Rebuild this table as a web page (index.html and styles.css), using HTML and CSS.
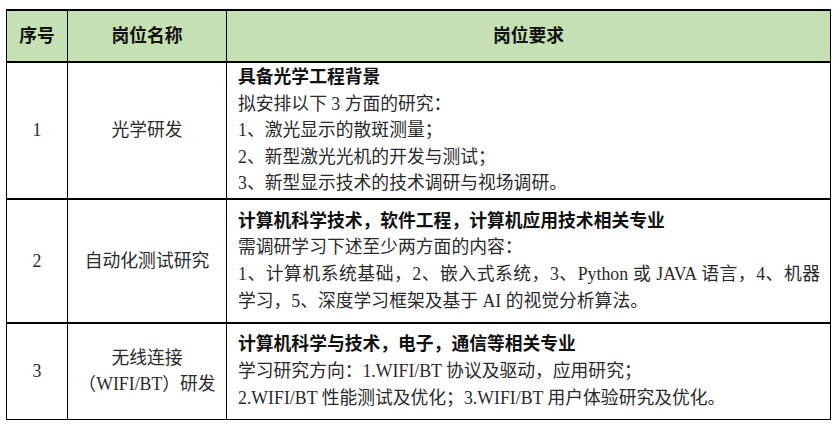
FILE: index.html
```html
<!DOCTYPE html>
<html lang="zh-CN">
<head>
<meta charset="utf-8">
<title>岗位要求</title>
<link rel="stylesheet" href="styles.css">
</head>
<body>
<div class="wrap">
<table class="jobs">
  <colgroup>
    <col class="c-no">
    <col class="c-name">
    <col class="c-req">
  </colgroup>
  <thead>
    <tr class="head">
      <th>序号</th>
      <th>岗位名称</th>
      <th>岗位要求</th>
    </tr>
  </thead>
  <tbody>
    <tr class="r1">
      <td class="no">1</td>
      <td class="name">光学研发</td>
      <td class="req">
        <div class="ttl">具备光学工程背景</div>
        <div>拟安排以下 3 方面的研究：</div>
        <div>1、激光显示的散斑测量；</div>
        <div>2、新型激光光机的开发与测试；</div>
        <div>3、新型显示技术的技术调研与视场调研。</div>
      </td>
    </tr>
    <tr class="r2">
      <td class="no">2</td>
      <td class="name">自动化测试研究</td>
      <td class="req">
        <div class="ttl">计算机科学技术，软件工程，计算机应用技术相关专业</div>
        <div>需调研学习下述至少两方面的内容：</div>
        <div class="just">1、计算机系统基础，2、嵌入式系统，3、Python 或 JAVA 语言，4、机器</div>
        <div>学习，5、深度学习框架及基于 AI 的视觉分析算法。</div>
      </td>
    </tr>
    <tr class="r3">
      <td class="no">3</td>
      <td class="name"><div>无线连接</div><div>（WIFI/BT）研发</div></td>
      <td class="req">
        <div class="ttl">计算机科学与技术，电子，通信等相关专业</div>
        <div>学习研究方向：1.WIFI/BT 协议及驱动，应用研究；</div>
        <div>2.WIFI/BT 性能测试及优化；3.WIFI/BT 用户体验研究及优化。</div>
      </td>
    </tr>
  </tbody>
</table>
</div>
</body>
</html>
```

FILE: styles.css
```css
html, body {
  margin: 0;
  padding: 0;
  background: #ffffff;
}

body {
  font-family: "Liberation Serif", "Noto Sans CJK SC", serif;
  font-size: 17.8px;
  color: #2a2a2a;
}

.wrap {
  padding: 9px 0 0 6px;
}

.jobs {
  border-collapse: collapse;
  table-layout: fixed;
  width: 824px;
}

.c-no { width: 61px; }
.c-name { width: 159px; }
.c-req { width: 604px; }

.jobs th,
.jobs td {
  border: 1px solid #000;
  padding: 0;
  vertical-align: middle;
  line-height: 26.6px;
}

.jobs th {
  background: #c5e0b3;
  font-weight: 700;
  color: #111;
  border-top: 2px solid #000;
  border-bottom: 2px solid #000;
  text-align: center;
}

.head { height: 52px; }
.r1 { height: 137px; }
.r2 { height: 124px; }
.r3 { height: 96px; }

.r2 td, .r3 td {
  border-top: 2px solid #000;
}

.no, .name {
  text-align: center;
}

.req {
  padding: 0 10px 0 11px !important;
  text-align: left;
}

.ttl {
  font-weight: 700;
  color: #111;
}

.just {
  text-align: justify;
  text-align-last: justify;
}
```
